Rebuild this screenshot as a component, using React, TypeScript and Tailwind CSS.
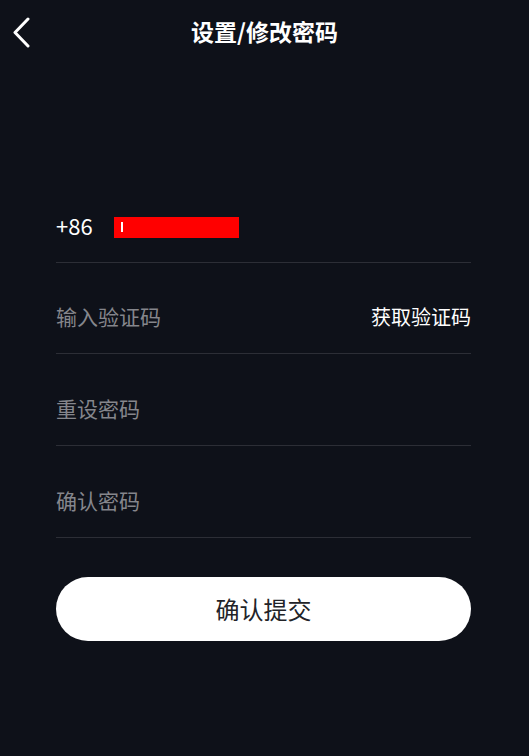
const FONT = "font-['Noto_Sans_CJK_SC','Noto_Sans',sans-serif]";

function Row({ children, className = "" }: { children: React.ReactNode; className?: string }) {
  return (
    <div className={`flex h-[91.7px] items-center justify-between border-b border-[#2c2e36] pt-[18px] ${className}`}>
      {children}
    </div>
  );
}

export default function App() {
  return (
    <div className={`flex h-[756px] w-[529px] flex-col bg-[#0e1119] ${FONT}`}>
      {/* header */}
      <div className="relative flex h-[62px] items-center justify-center">
        <button className="absolute left-[10px] top-[15px] p-0.5 text-white">
          <svg width="18" height="31" viewBox="0 0 18 31" fill="none">
            <path d="M16 2 L3 15.5 L16 29" stroke="currentColor" strokeWidth="3" strokeLinecap="round" strokeLinejoin="round" />
          </svg>
        </button>
        <h1 className="text-[23px] font-bold leading-none text-white">设置/修改密码</h1>
      </div>

      {/* form */}
      <div className="ml-[56px] mr-[58px] mt-[109px] flex flex-col">
        <Row className="justify-start">
          <span className="text-[22px] text-white">+86</span>
          <div className="ml-[21px] mt-[4px] flex h-[21px] w-[125px] items-center bg-[#ff0000] pl-[7px]">
            <span className="h-[10px] w-[2px] bg-white" />
          </div>
        </Row>
        <Row>
          <span className="text-[21px] text-[#85868c]">输入验证码</span>
          <span className="text-[20px] text-white">获取验证码</span>
        </Row>
        <Row>
          <span className="text-[21px] text-[#85868c]">重设密码</span>
        </Row>
        <Row>
          <span className="text-[21px] text-[#85868c]">确认密码</span>
        </Row>

        <button className="mt-[39px] h-[64px] rounded-full bg-white text-[24px] text-[#222328]">确认提交</button>
      </div>
    </div>
  );
}
